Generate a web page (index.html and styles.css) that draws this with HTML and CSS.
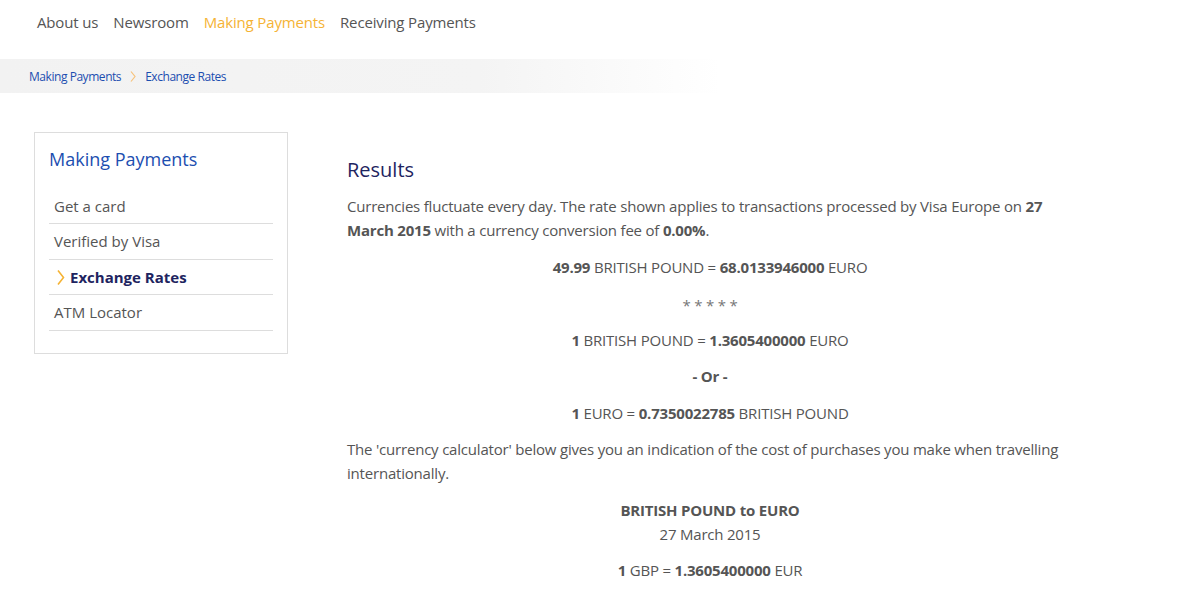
FILE: index.html
```html
<!DOCTYPE html>
<html>
<head>
    <title>Exchange Rates</title>
    <link rel="stylesheet" href="styles.css">
</head>
<body>
    <div class="topnav">
        <a href="#">About us</a>
        <a href="#">Newsroom</a>
        <a href="#" class="active">Making Payments</a>
        <a href="#">Receiving Payments</a>
    </div>

    <div class="crumbs">
        <a href="#">Making Payments</a>
        <svg class="sep" width="6" height="11" viewBox="0 0 6 11"><path d="M1 0.5 L5 5.5 L1 10.5" fill="none" stroke="#f7c27a" stroke-width="1.2"/></svg>
        <a href="#">Exchange Rates</a>
    </div>

    <div class="main">
        <div class="side">
            <h2>Making Payments</h2>
            <ul>
                <li><a href="#">Get a card</a></li>
                <li><a href="#">Verified by Visa</a></li>
                <li class="current"><a href="#"><svg class="arrow" width="8" height="15" viewBox="0 0 8 15"><path d="M1 0.5 L6.5 7.5 L1 14.5" fill="none" stroke="#f5b335" stroke-width="1.6"/></svg>Exchange Rates</a></li>
                <li><a href="#">ATM Locator</a></li>
            </ul>
        </div>

        <div class="content">
            <h1>Results</h1>
            <p>Currencies fluctuate every day. The rate shown applies to transactions processed by Visa Europe on <b>27 March 2015</b> with a currency conversion fee of <b>0.00%</b>.</p>
            <p class="center"><b>49.99</b> BRITISH POUND = <b>68.0133946000</b> EURO</p>
            <p class="center stars">* * * * *</p>
            <p class="center"><b>1</b> BRITISH POUND = <b>1.3605400000</b> EURO</p>
            <p class="center"><b>- Or -</b></p>
            <p class="center"><b>1</b> EURO = <b>0.7350022785</b> BRITISH POUND</p>
            <p>The 'currency calculator' below gives you an indication of the cost of purchases you make when travelling internationally.</p>
            <p class="center"><b>BRITISH POUND to EURO</b><br>27 March 2015</p>
            <p class="center"><b>1</b> GBP = <b>1.3605400000</b> EUR</p>
        </div>
    </div>
</body>
</html>
```

FILE: styles.css
```css
body { margin: 0; font-family: "Open Sans", sans-serif; color: #555; background: #fff; }
a { text-decoration: none; }

.topnav { display: flex; gap: 15px; padding: 12px 0 0 37px; height: 59px; box-sizing: border-box; }
.topnav a { color: #555; font-size: 15px; letter-spacing: -0.15px; }
.topnav a.active { color: #f5b335; }

.crumbs { height: 34px; display: flex; align-items: center; gap: 9px; padding-left: 29px; background: linear-gradient(to right, #f2f2f2 0, #f4f4f4 40%, #fff 60%); font-size: 12px; letter-spacing: -0.45px; }
.crumbs a { color: #1c4eb0; }

.main { display: flex; align-items: flex-start; padding: 39px 0 0 34px; }
.side { width: 224px; border: 1px solid #ddd; padding: 14px 14px 22px; }
.side h2 { margin: 0 0 17.5px; font-size: 18px; line-height: 24px; font-weight: normal; color: #1c4eb0; }
.side ul { list-style: none; margin: 0; padding: 0; }
.side li { border-bottom: 1px solid #ddd; padding: 7px 5px 6.5px; font-size: 15px; line-height: 21px; }
.side li a { color: #555; display: flex; align-items: center; }
.side li.current a { color: #1e2460; font-weight: bold; }
.side .arrow { margin: 0 5px 0 3px; }

.content { width: 726px; margin-left: 59px; padding-top: 25px; }
.content h1 { margin: 0 0 11px; font-size: 20px; line-height: 26px; font-weight: normal; color: #1e2460; }
.content p { margin: 0 0 12.5px; font-size: 15px; line-height: 24px; letter-spacing: -0.2px; }
.content .center { text-align: center; }
.content .stars { color: #777; padding-top: 2px; margin-bottom: 10.5px; }
```
